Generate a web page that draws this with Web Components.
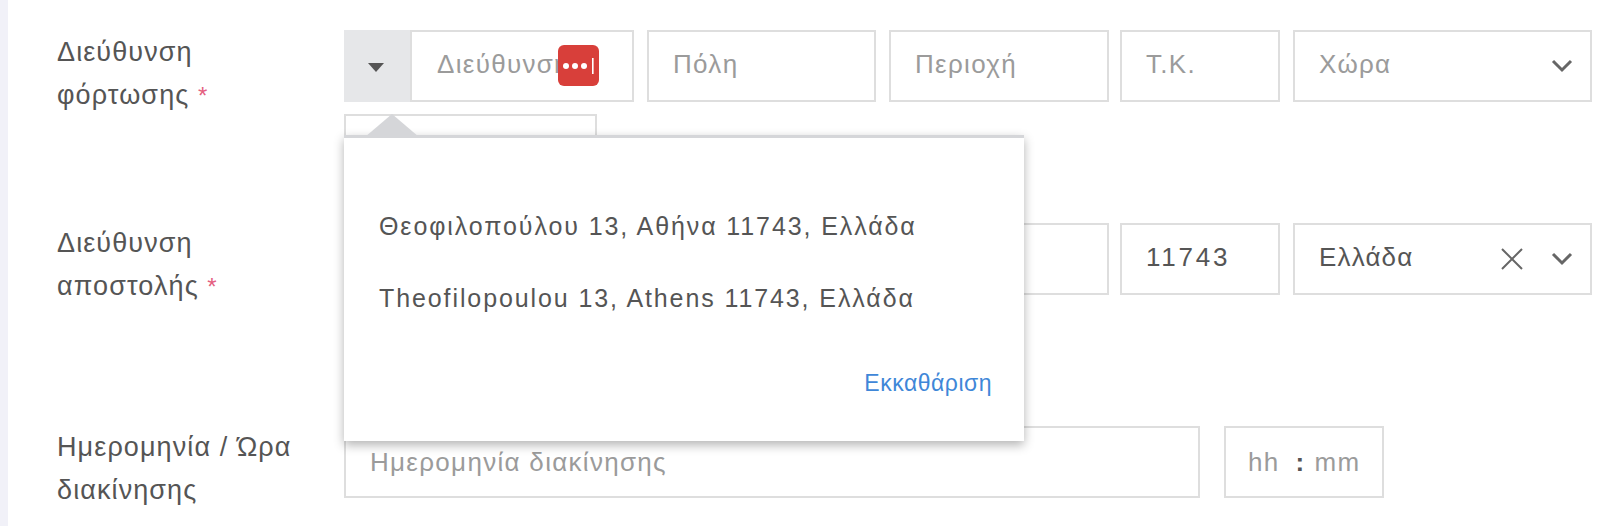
<!DOCTYPE html>
<html lang="el">
<head>
<meta charset="utf-8">
<title>Form</title>
<style>
  html, body { margin: 0; height: 526px; overflow: hidden; background: #fff; }
  body {
    font-family: "Liberation Sans", "Noto Sans", sans-serif;
    color: #555;
    border-left: 8px solid #f1f1f8;
  }
</style>
</head>
<body>
<shipping-form>
  <form-row height="193">
    <span slot="label">Διεύθυνση<br>φόρτωσης <req-mark></req-mark></span>
    <div style="display:flex;gap:13px">
      <text-field w="290" placeholder="Διεύθυνση" prefix><lastpass-icon></lastpass-icon></text-field>
      <text-field w="229" placeholder="Πόλη"></text-field>
      <text-field w="220" placeholder="Περιοχή"></text-field>
      <text-field w="160" placeholder="Τ.Κ." style="margin-left:-2px"></text-field>
      <select-field w="299" placeholder="Χώρα"></select-field>
    </div>
    <text-field style="margin-top:12px" w="253" placeholder=""></text-field>
    <address-popover>
      <span slot="item">Θεοφιλοπούλου 13, Αθήνα 11743, Ελλάδα</span>
      <span slot="item">Theofilopoulou 13, Athens 11743, Ελλάδα</span>
      <span slot="clear">Εκκαθάριση</span>
    </address-popover>
  </form-row>
  <form-row height="203" label-shift="-2">
    <span slot="label">Διεύθυνση<br>αποστολής <req-mark></req-mark></span>
    <div style="display:flex;gap:13px">
      <text-field w="290" placeholder=""></text-field>
      <text-field w="229" placeholder=""></text-field>
      <text-field w="220" placeholder=""></text-field>
      <text-field w="160" value="11743" style="letter-spacing:2.8px;margin-left:-2px"></text-field>
      <select-field w="299" value="Ελλάδα" clearable></select-field>
    </div>
  </form-row>
  <form-row height="72" label-shift="-1">
    <span slot="label">Ημερομηνία / Ώρα<br>διακίνησης</span>
    <div style="display:flex;gap:24px;--pb:0px">
      <text-field w="856" placeholder="Ημερομηνία διακίνησης"></text-field>
      <text-field w="160" placeholder="hh" time style="--pl:22px"></text-field>
    </div>
  </form-row>
</shipping-form>

<script>
class ShippingForm extends HTMLElement {
  constructor() {
    super();
    this.attachShadow({ mode: "open" });
    this.shadowRoot.innerHTML = `
      <style>
        :host { display: block; padding-top: 30px; }
      </style>
      <slot></slot>`;
  }
}
customElements.define("shipping-form", ShippingForm);

class FormRow extends HTMLElement {
  constructor() {
    super();
    this.attachShadow({ mode: "open" });
    this.shadowRoot.innerHTML = `
      <style>
        :host { display: grid; grid-template-columns: 336px 1fr; position: relative; }
        .label { padding: 1px 0 0 49px; font-size: 27px; line-height: 43px; letter-spacing: 1.1px; color: #555; }
        .body { position: relative; }
      </style>
      <div class="label"><slot name="label"></slot></div>
      <div class="body"><slot></slot></div>`;
  }
  connectedCallback() {
    this.style.height = this.getAttribute("height") + "px";
    const shift = this.getAttribute("label-shift");
    if (shift) this.shadowRoot.querySelector(".label").style.marginTop = shift + "px";
  }
}
customElements.define("form-row", FormRow);

class ReqMark extends HTMLElement {
  constructor() {
    super();
    this.attachShadow({ mode: "open" });
    this.shadowRoot.innerHTML = `
      <style>:host { display: inline; color: #e4607f; font-size: 24px; }</style>*`;
  }
}
customElements.define("req-mark", ReqMark);

class TextField extends HTMLElement {
  constructor() {
    super();
    this.attachShadow({ mode: "open" });
    this.shadowRoot.innerHTML = `
      <style>
        :host {
          display: flex; box-sizing: border-box; height: 72px; position: relative;
          border: 2px solid #dedede; background: #fff; font-size: 26px; letter-spacing: 1.3px;
        }
        .pre { display: none; width: 66px; margin: -2px 0 -2px 0; background: #e6e7e9; align-items: center; justify-content: center; }
        :host([prefix]) .pre { display: flex; }
        :host([prefix]) { border-left: 0; }
        .pre i { display: block; width: 0; height: 0; margin: 2px 0 0 -2px; border: 8.5px solid transparent; border-top: 9px solid #555; border-bottom: 0; }
        .txt { flex: 1; min-width: 0; overflow: hidden; white-space: nowrap; display: flex; align-items: center; padding: 0 0 var(--pb, 3px) var(--pl, 24px); color: #555; }
        :host([prefix]) .txt { border-left: 2px solid #dedede; padding-left: 25px; }
        .ph { color: #9b9b9b; }
        .colon { color: #555; margin: 0 9px 0 16px; font-weight: 700; }
      </style>
      <div class="pre"><i></i></div>
      <div class="txt"></div>
      <slot></slot>`;
  }
  connectedCallback() {
    this.style.width = this.getAttribute("w") + "px";
    const txt = this.shadowRoot.querySelector(".txt");
    const value = this.getAttribute("value");
    if (value) {
      txt.textContent = value;
    } else {
      const ph = document.createElement("span");
      ph.className = "ph";
      ph.textContent = this.getAttribute("placeholder");
      txt.appendChild(ph);
    }
    if (this.hasAttribute("time")) {
      txt.innerHTML = `<span class="ph">hh</span><span class="colon">:</span><span class="ph">mm</span>`;
    }
  }
}
customElements.define("text-field", TextField);

class SelectField extends HTMLElement {
  constructor() {
    super();
    this.attachShadow({ mode: "open" });
    this.shadowRoot.innerHTML = `
      <style>
        :host {
          display: flex; box-sizing: border-box; height: 72px; align-items: center;
          border: 2px solid #dedede; font-size: 26px; letter-spacing: 1.15px; color: #555;
        }
        .txt { flex: 1; padding: 0 0 4px 24px; }
        .ph { color: #9b9b9b; }
        svg { display: block; flex: none; }
        .x { margin-right: 27px; display: none; }
        :host([clearable]) .x { display: block; }
        .chev { margin-right: 17px; }
      </style>
      <div class="txt"></div>
      <svg class="x" width="24" height="24" viewBox="0 0 24 24" fill="none" stroke="#666" stroke-width="2"><path d="M2 2 22 22M22 2 2 22"/></svg>
      <svg class="chev" width="22" height="14" viewBox="0 0 22 14" fill="none" stroke="#666" stroke-width="3"><path d="M2 2 11 11 20 2"/></svg>`;
  }
  connectedCallback() {
    this.style.width = this.getAttribute("w") + "px";
    const txt = this.shadowRoot.querySelector(".txt");
    const value = this.getAttribute("value");
    if (value) txt.textContent = value;
    else txt.innerHTML = `<span class="ph">${this.getAttribute("placeholder")}</span>`;
  }
}
customElements.define("select-field", SelectField);

class LastpassIcon extends HTMLElement {
  constructor() {
    super();
    this.attachShadow({ mode: "open" });
    this.shadowRoot.innerHTML = `
      <style>
        :host { position: absolute; left: 214px; top: 13px; width: 41px; height: 41px; display: block; }
        svg { display: block; }
      </style>
      <svg width="41" height="41" viewBox="0 0 41 41">
        <rect width="41" height="41" rx="6" fill="#d83f3a"/>
        <circle cx="8" cy="21" r="3" fill="#fff"/>
        <circle cx="17" cy="21" r="3" fill="#fff"/>
        <circle cx="26" cy="21" r="3" fill="#fff"/>
        <rect x="34" y="13" width="1.6" height="16" fill="#fff"/>
      </svg>`;
  }
}
customElements.define("lastpass-icon", LastpassIcon);

class AddressPopover extends HTMLElement {
  constructor() {
    super();
    this.attachShadow({ mode: "open" });
    this.shadowRoot.innerHTML = `
      <style>
        :host {
          position: absolute; left: 0; top: 105px; width: 680px; height: 306px; z-index: 5;
          box-sizing: border-box; display: block; background: #fff; border-top: 3px solid #d5d6d9;
          box-shadow: 0 4px 10px rgba(0,0,0,.3); font-size: 25px; letter-spacing: 1.9px; color: #555;
        }
        .arrow { position: absolute; left: 21px; top: -24px; width: 0; height: 0; border: 27px solid transparent; border-top: 0; border-bottom: 23px solid #d5d6d9; }
        .items { display: flex; flex-direction: column; gap: 40px; padding: 72px 0 0 35px; line-height: 32px; }
        ::slotted([slot="item"]) { display: block; }
        .clear { position: absolute; right: 32px; bottom: 44px; color: #3f87d8; font-size: 23px; letter-spacing: .5px; }
      </style>
      <div class="arrow"></div>
      <div class="items"><slot name="item"></slot></div>
      <div class="clear"><slot name="clear"></slot></div>`;
  }
}
customElements.define("address-popover", AddressPopover);
</script>
</body>
</html>
